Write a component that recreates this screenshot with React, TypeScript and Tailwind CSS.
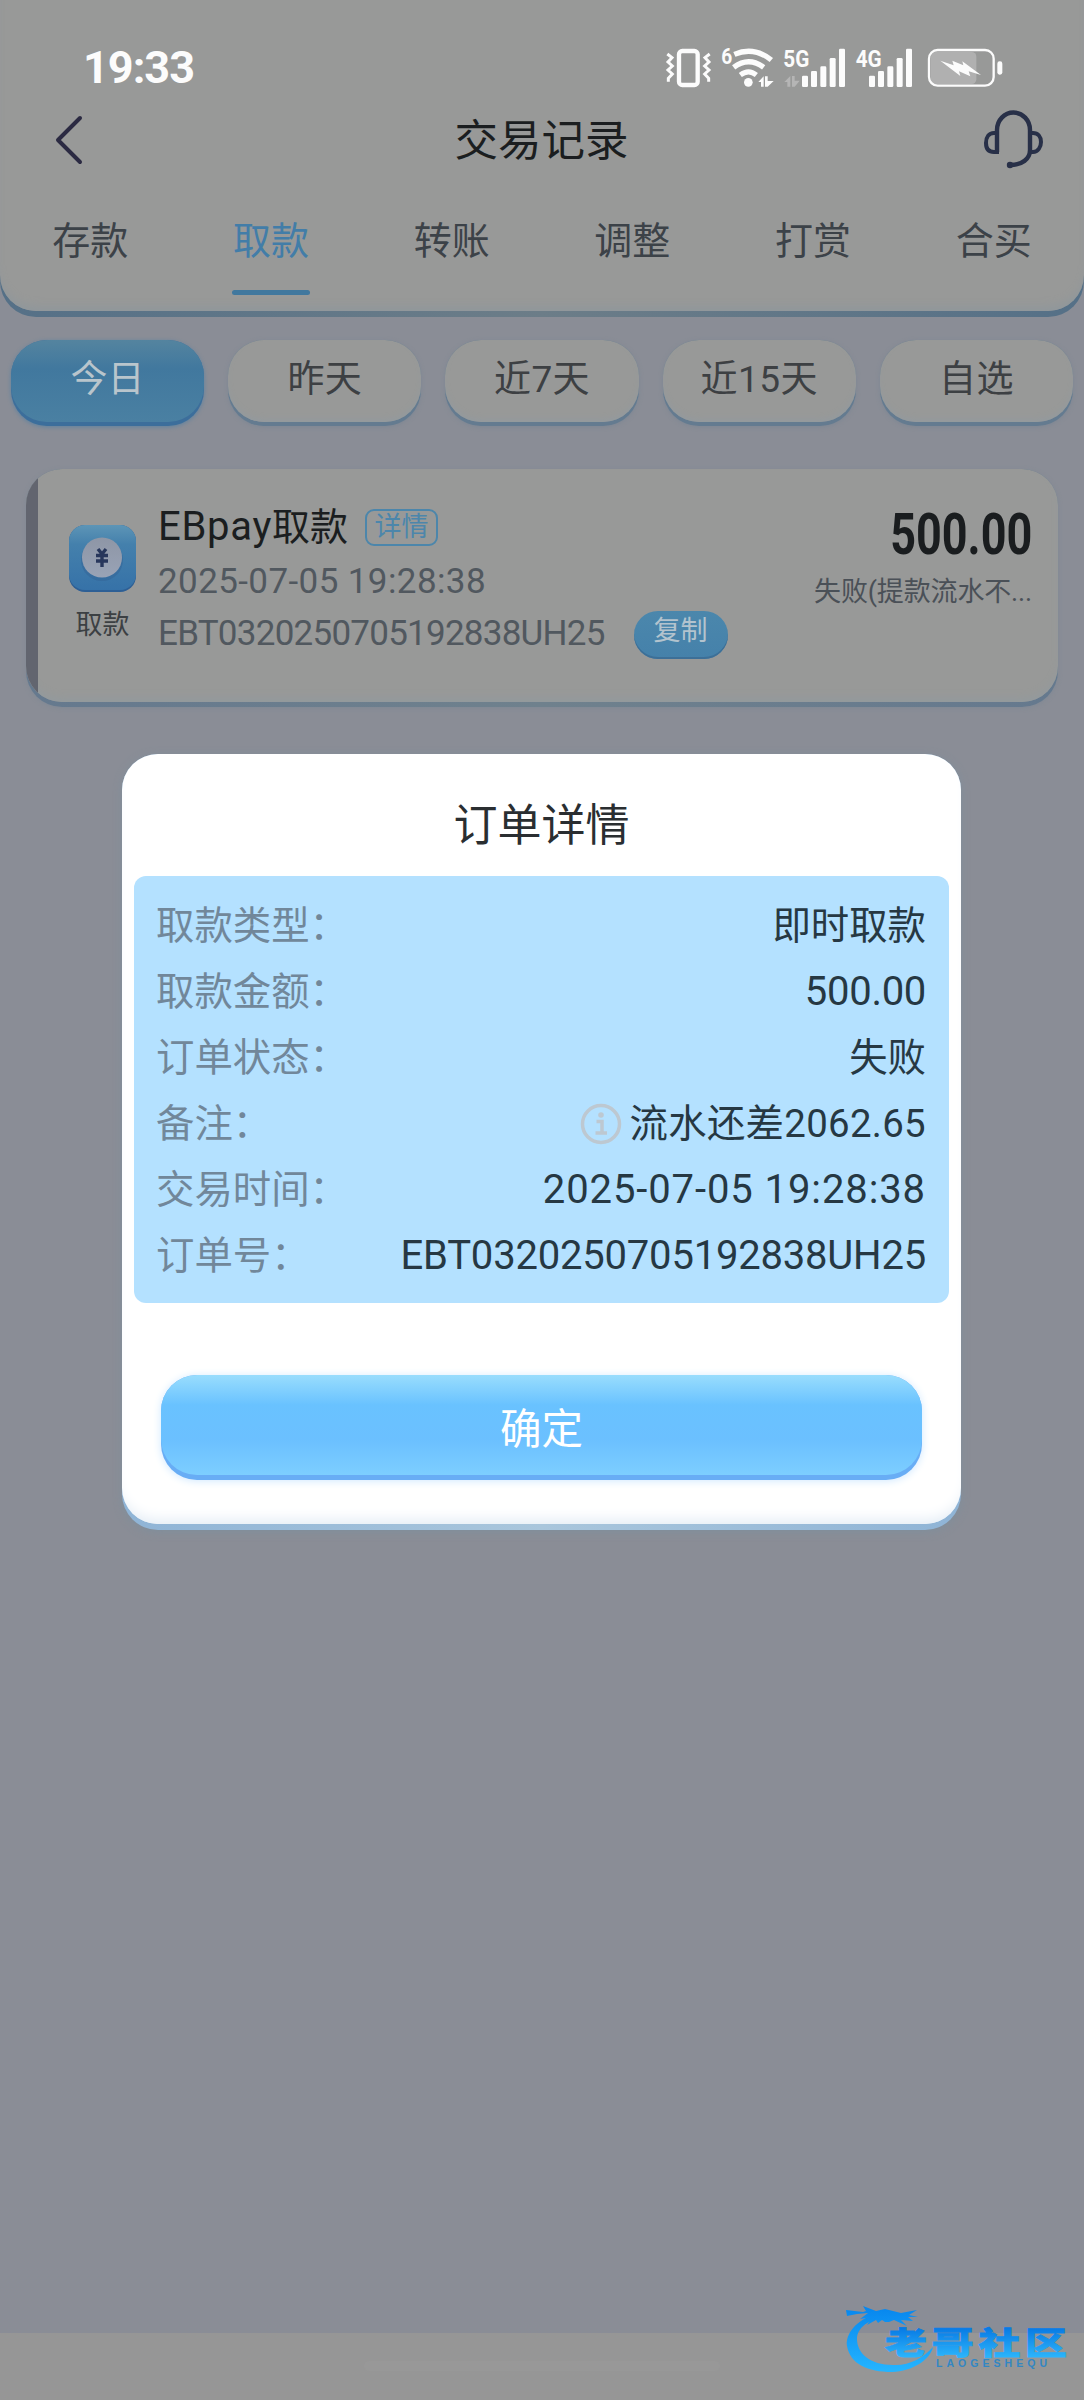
import React from "react"

const tabs = ["存款", "取款", "转账", "调整", "打赏", "合买"]
const ranges = ["今日", "昨天", "近7天", "近15天", "自选"]

const details = [
  { label: "取款类型：", value: "即时取款", font: "text-[38.4px]" },
  { label: "取款金额：", value: "500.00", font: "text-[40px] tracking-[-0.3px]" },
  { label: "订单状态：", value: "失败", font: "text-[38.4px]" },
  { label: "备注：", value: "流水还差2062.65", font: "text-[38.4px] tracking-[0.3px]", info: true },
  { label: "交易时间：", value: "2025-07-05 19:28:38", font: "text-[40px] tracking-[0.9px]" },
  { label: "订单号：", value: "EBT0320250705192838UH25", font: "text-[40px] tracking-[-0.2px]" },
]

function VibrateIcon() {
  return (
    <svg className="h-[40px] w-[47px]" viewBox="77 54 141 120" fill="none" stroke="#fcfcfc">
      <rect x="119" y="63" width="56" height="102" rx="10" strokeWidth="13" />
      <path d="M84 72l14 11-12 13 13 12-13 12 13 12-12 13 0 10" strokeWidth="9" />
      <path d="M211 72l-14 11 12 13-13 12 13 12-13 12 12 13 0 10" strokeWidth="9" />
    </svg>
  )
}

function WifiIcon() {
  return (
    <svg className="h-[42px] w-[54px] overflow-visible" viewBox="246 48 162 126" fill="none" stroke="#fcfcfc">
      <text x="247" y="101" fill="#fcfcfc" stroke="none" fontSize="66" fontWeight="700" fontFamily="Roboto" textLength="33" lengthAdjust="spacingAndGlyphs">6</text>
      <path d="M286 73Q345 48 397 90" strokeWidth="16" />
      <path d="M284 112Q329 78 374 112" strokeWidth="16" />
      <path d="M304 135Q329 116 352 135" strokeWidth="15" />
      <circle cx="328" cy="157" r="13" fill="#fcfcfc" stroke="none" />
      <path d="M358 156l16-17v31h-8v-14zM378 139h8v14h18l-18 17h-8z" fill="#fcfcfc" stroke="none" />
    </svg>
  )
}

function SignalIcon({ label, data }: { label: string; data?: boolean }) {
  return (
    <svg className="h-[40px] w-[63px] overflow-visible" viewBox="432 54 189 120" fill="#fcfcfc">
      <text x={data ? 433 : 449} y="110" fontSize="69" fontWeight="700" fontFamily="Roboto" textLength="78" lengthAdjust="spacingAndGlyphs">
        {label}
      </text>
      {data && <path d="M436 156l18-18v32h-9v-14zM459 138h8v14h15l-15 18h-8z" fill="#b5b5b5" />}
      <rect x="489" y="137" width="18" height="34" rx="4" />
      <rect x="516" y="123" width="18" height="48" rx="4" />
      <rect x="544" y="109" width="18" height="62" rx="4" />
      <rect x="572" y="84" width="18" height="87" rx="4" />
      <rect x="600" y="56" width="18" height="115" rx="4" />
    </svg>
  )
}

function BatteryIcon() {
  return (
    <svg className="h-[40px] w-[77px]" viewBox="864 52 231 120" fill="none">
      <rect x="876" y="64" width="136" height="96" rx="14" fill="#b0b0b0" />
      <rect x="870" y="58" width="194" height="107" rx="26" stroke="#fcfcfc" strokeWidth="7" />
      <rect x="1075" y="92" width="15" height="40" rx="7" fill="#fcfcfc" />
      <path d="M904 90l40 14-4-14 33 14-3-12 56 41-37-11 5 15-34-15 4 14z" fill="#fcfcfc" />
    </svg>
  )
}

function HeadsetIcon() {
  return (
    <svg className="h-[60px] w-[62px]" viewBox="0 0 62 60" fill="none" stroke="#283048" strokeWidth="4.4">
      <path d="M15 42V20a16.500 17.500 0 0 1 33 0v20c0 9-8 15-20 15" />
      <path d="M15 23h-3c-5 0-8 4-8 10s3 9 8 9h3zM48 23h3c5 0 8 4 8 9s-3 10-8 10h-3" strokeWidth="4" />
      <circle cx="28" cy="55" r="3.200" fill="#283048" stroke="none" />
    </svg>
  )
}

function WithdrawIcon() {
  return (
    <svg className="h-[67px] w-[67px]" viewBox="0 0 67 67">
      <defs>
        <linearGradient id="tile" x1="0" y1="0" x2="0" y2="1">
          <stop offset="0" stopColor="#5d95b6" />
          <stop offset="0.3" stopColor="#4480ac" />
          <stop offset="1" stopColor="#3672a8" />
        </linearGradient>
        <linearGradient id="coin" x1="0" y1="0" x2="0" y2="1">
          <stop offset="0" stopColor="#8e96a6" />
          <stop offset="1" stopColor="#99a3b6" />
        </linearGradient>
      </defs>
      <rect width="67" height="67" rx="16" fill="#2d5f95" />
      <rect width="67" height="65" rx="16" fill="url(#tile)" />
      <circle cx="33" cy="35" r="21" fill="#336496" opacity="0.5" />
      <circle cx="33" cy="32.500" r="20" fill="url(#coin)" />
      <path d="M29 24l4 5 4-5M27 30.500h12M27 36h12M33 29v13" fill="none" stroke="#28375c" strokeWidth="3.400" />
    </svg>
  )
}

function InfoIcon() {
  return (
    <svg className="mr-[8px] h-[42px] w-[42px]" viewBox="0 0 42 42" fill="none" stroke="#bdc8d1">
      <circle cx="21" cy="21" r="18.500" strokeWidth="3.500" />
      <circle cx="21" cy="12" r="2.800" fill="#bdc8d1" stroke="none" />
      <path d="M16.500 18.500H22v11M15.500 30h11.500" strokeWidth="3.500" />
    </svg>
  )
}

function Watermark() {
  return (
    <svg className="absolute right-[15px] bottom-[26px] h-[74px] w-[226px] overflow-visible" viewBox="0 0 226 74">
      <defs>
        <linearGradient id="brand" gradientUnits="userSpaceOnUse" x1="0" y1="8" x2="0" y2="70">
          <stop offset="0" stopColor="#0787ee" />
          <stop offset="1" stopColor="#24b4ff" />
        </linearGradient>
        {/* runs in the text's own space, around its baseline */}
        <linearGradient id="brandText" gradientUnits="userSpaceOnUse" x1="0" y1="-25" x2="0" y2="3">
          <stop offset="0" stopColor="#087be5" />
          <stop offset="1" stopColor="#2bb3fa" />
        </linearGradient>
      </defs>
      <path
        d="M34 14C13 19 2 35 4 46C7 64 25 72 49 72C70 71 87 60 90 47C80 58 66 66 50 65C27 65 14 53 14 39C14 29 24 20 37 19Z"
        fill="url(#brand)"
      />
      <path
        d="M3 10l17 2 3-1-3-5 13 5 9-2 16 4 16-3-8 5 9 2-10 0 5 4-12-1 6 6-13-6-5 2-4 0-3-2-4 3-2-3-9 5 5-8-12 2 8-6-11 1-10 2z"
        fill="url(#brand)"
      />
      <g fill="url(#brandText)" stroke="url(#brandText)" strokeWidth="0.800" fontFamily="Noto Sans CJK SC" fontWeight="900">
        <text transform="translate(42 53.500) scale(1.350 1)" fontSize="31" letterSpacing="3.600">老哥社区</text>
      </g>
      <text x="93" y="66.500" fill="#3287c4" fontSize="10.500" fontFamily="Liberation Sans" fontWeight="700" textLength="111">LAOGESHEQU</text>
    </svg>
  )
}

function StatusBar() {
  return (
    <div className="flex h-[106px] items-start justify-between pt-[44px] pr-[80px] pl-[83px]">
      <span className="text-[45px] leading-[48px] font-bold tracking-[-1px] text-[#fcfcfc]">19:33</span>
      <div className="flex items-start pt-1">
        <VibrateIcon />
        <div className="-mt-[2px] ml-[9px]">
          <WifiIcon />
        </div>
        <div className="ml-[8px]">
          <SignalIcon label="5G" data />
        </div>
        <div className="ml-[4px]">
          <SignalIcon label="4G" />
        </div>
        <div className="ml-[14px]">
          <BatteryIcon />
        </div>
      </div>
    </div>
  )
}

function Header() {
  return (
    <header className="h-[317px] rounded-b-[36px] bg-linear-to-r from-[#557087] via-[#6c7d88] to-[#557087] pb-[6px]">
      <div className="h-full rounded-b-[36px] bg-[#989998] shadow-[inset_0_-8px_10px_-4px_#8f979c]">
        <StatusBar />
        <div className="flex h-[68px] items-center justify-between pr-[40px] pl-[54px]">
          <svg className="h-[52px] w-[30px]" viewBox="0 0 30 52" fill="none" stroke="#2b2a42" strokeWidth="4" strokeLinecap="round" strokeLinejoin="round">
            <path d="M26 4L4 26l22 22" />
          </svg>
          <h1 className="ml-[17px] pt-[4px] text-[43.5px] leading-[60px] text-[#1b1e20]">交易记录</h1>
          <HeadsetIcon />
        </div>
        <nav className="grid h-[121px] grid-cols-6 pt-[40px]">
          {tabs.map((tab) => (
            <div key={tab} className={tab === "取款" ? "flex flex-col items-center text-[#427da8]" : "flex flex-col items-center text-[#3c4248]"}>
              <span className="text-[38px] leading-[54px]">{tab}</span>
              {tab === "取款" && <span className="mt-[22px] h-[5px] w-[78px] rounded-full bg-[#41789e]" />}
            </div>
          ))}
        </nav>
      </div>
    </header>
  )
}

function RangeFilter() {
  return (
    <div className="mt-[23px] grid grid-cols-5 gap-6 px-[11px]">
      {ranges.map((range) =>
        range === "今日" ? (
          <div key={range} className="h-[86px] rounded-[36px] bg-[#3c6e9b] pb-1 shadow-[0_1px_4px_#5d82a0]">
            <div className="flex h-full justify-center rounded-[36px] bg-linear-to-b from-[#54849f] via-[#41789e] via-35% to-[#4a80a2] pt-[13px] text-[37px] leading-[54px] text-[#b9c5cc]">
              {range}
            </div>
          </div>
        ) : (
          <div key={range} className="h-[86px] rounded-[36px] bg-[#647b90] pb-1 shadow-[0_1px_4px_#7d8794]">
            <div className="flex h-full justify-center rounded-[36px] bg-[#989998] pt-[13px] text-[37px] leading-[54px] tracking-[0.4px] text-[#3d4043] shadow-[inset_0_-4px_6px_-2px_#929a9f]">
              {range}
            </div>
          </div>
        )
      )}
    </div>
  )
}

function RecordCard() {
  return (
    <div className="mx-[26px] mt-[43px] h-[238px] rounded-[36px] bg-linear-to-r from-[#65798e] via-[#6f818d] to-[#65798e] pb-[5px] shadow-[0_1px_4px_#7f8995]">
      <div className="flex h-full overflow-hidden rounded-[36px] bg-[#989998] pr-[26px] shadow-[inset_0_-6px_8px_-3px_#929a9e]">
        <div className="w-[12px] shrink-0 bg-[#62656f]" />
        <div className="ml-[31px] flex w-[67px] flex-col items-center pt-[56px]">
          <WithdrawIcon />
          <span className="mt-[14px] text-[27px] leading-[38px] whitespace-nowrap text-[#3c4043]">取款</span>
        </div>
        <div className="ml-[22px] pt-[31px]">
          <div className="flex h-[54px] items-center">
            <span className="text-[38px] leading-[54px] text-[#1b1e20]">
              <span className="text-[40px] tracking-[0.7px]">EBpay</span>取款
            </span>
            <span className="ml-[17px] flex h-[37px] w-[73px] items-center justify-center rounded-[9px] border-2 border-[#4c86ab] text-[27px] leading-[33px] text-[#4c86ab]">
              详情
            </span>
          </div>
          <div className="pt-px text-[35px] leading-[54px] tracking-[0.4px] text-[#51585f]">2025-07-05 19:28:38</div>
          <div className="flex h-[50px] items-center">
            <span className="text-[35px] leading-[50px] tracking-[-0.75px] text-[#51585f]">EBT0320250705192838UH25</span>
            <span className="mt-[2px] ml-[29px] flex h-[48px] w-[94px] justify-center rounded-full bg-linear-to-b from-[#4b87ac] to-[#4581aa] pt-[2px] text-[27px] leading-[36px] text-[#b3c3ce] shadow-[inset_0_-2px_0_#3d6f97]">
              复制
            </span>
          </div>
        </div>
        <div className="ml-auto flex flex-col items-end pt-[32px]">
          <span className="origin-right scale-x-[0.775] text-[58px] leading-[66px] font-bold text-[#1a1d1f]">500.00</span>
          <span className="mt-[5px] text-[27px] leading-[40px] tracking-[-0.15px] whitespace-nowrap text-[#4a5057]">失败(提款流水不...</span>
        </div>
      </div>
    </div>
  )
}

function OrderDialog() {
  return (
    <div className="absolute top-[754px] left-[122px] h-[776px] w-[839px] rounded-[36px] bg-linear-to-r from-[#8fb4d6] via-[#a9c6dc] to-[#8fb4d6] pb-[6px] shadow-[0_2px_8px_#7f8f9c]">
      <div className="flex h-full flex-col rounded-[36px] bg-white px-[12px] shadow-[inset_0_-12px_14px_-8px_#e3ecf5]">
        <h2 className="h-[122px] pt-[41px] text-center text-[44px] leading-[62px] text-[#2a2e31]">订单详情</h2>
        <dl className="h-[427px] rounded-[12px] bg-[#b4e1ff] pt-[17px] pr-[23px] pl-[22px]">
          {details.map((row) => (
            <div key={row.label} className="flex h-[66px] items-center justify-between leading-[66px]">
              <dt className="text-[38.4px] text-[#71879a]">{row.label}</dt>
              <dd className={`flex items-center whitespace-nowrap text-[#263843] ${row.font}`}>
                {row.info && <InfoIcon />}
                {row.value}
              </dd>
            </div>
          ))}
        </dl>
        <button className="mx-[27px] mt-[72px] h-[105px] rounded-[36px] bg-[#68adf5] pb-[5px] shadow-[0_1px_8px_#cfe8ff]">
          <span className="flex h-full items-center justify-center rounded-[36px] bg-[linear-gradient(to_bottom,#99ddfd,#69c2ff_30%,#6bc0ff_65%,#7dceff)] pt-[10px] text-[41.5px] leading-[60px] text-white">
            确定
          </span>
        </button>
      </div>
    </div>
  )
}

export default function App() {
  return (
    <div className="relative flex h-[2400px] w-[1084px] flex-col overflow-hidden bg-[#8a8d96] font-[Roboto,'Noto_Sans_CJK_SC',sans-serif]">
      <Header />
      <RangeFilter />
      <RecordCard />
      <footer className="mt-auto flex h-[67px] justify-center bg-[#969696] pt-[28px]">
        <span className="h-[10px] w-[356px] rounded-full bg-[#989898]" />
      </footer>
      <OrderDialog />
      <Watermark />
    </div>
  )
}
